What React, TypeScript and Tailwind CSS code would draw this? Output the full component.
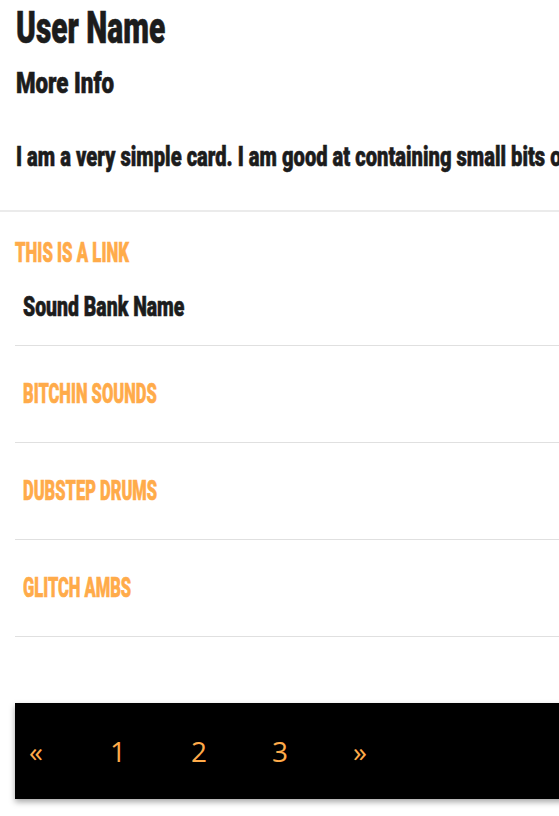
import React from 'react';

const banks = ['BITCHIN SOUNDS', 'DUBSTEP DRUMS', 'GLITCH AMBS'];
const pages = ['«', '1', '2', '3', '»'];

const display = { fontFamily: 'Roboto, Inter, "Liberation Sans", sans-serif' };

const App = () => {
  return (
    <div className="w-full overflow-hidden bg-white text-[#1c1c1c]" style={display}>
      <div className="w-[1200px] pb-4 [-webkit-text-stroke:0.6px_currentColor]">
        <div className="whitespace-nowrap px-4 pt-1">
          <h1 className="text-[44px] font-black leading-[48px]">
            <span className="inline-block origin-left scale-x-[0.68]">User Name</span>
          </h1>
          <h2 className="mt-[14px] text-[29px] font-black leading-[34px]">
            <span className="inline-block origin-left scale-x-[0.77]">More Info</span>
          </h2>
          <p className="mt-[40px] text-[28px] font-black leading-[34px]">
            <span className="inline-block origin-left scale-x-[0.72]">
              I am a very simple card. I am good at containing small bits of information.
            </span>
          </p>
        </div>
        <hr className="mt-[36px] border-t-2 border-[#ebebeb]" />
        <div className="px-[15px]">
          <a className="mt-[25px] block whitespace-nowrap text-[27px] font-black uppercase leading-[32px] text-[#ffab4a]">
            <span className="inline-block origin-left scale-x-[0.62]">This is a link</span>
          </a>
          <div className="flex h-[77px] items-center border-b border-[#e0e0e0] px-2">
            <span className="inline-block origin-left scale-x-[0.72] text-[27px] font-black leading-[32px]">
              Sound Bank Name
            </span>
          </div>
          {banks.map(b => (
            <div key={b} className="flex h-[97px] items-center border-b border-[#e0e0e0] px-2">
              <span className="inline-block origin-left scale-x-[0.61] text-[27px] font-black leading-[32px] text-[#ffab4a]">
                {b}
              </span>
            </div>
          ))}
          <nav className="mt-[66px] flex h-[96px] items-center bg-black shadow-[0_3px_6px_rgba(0,0,0,0.35)] [-webkit-text-stroke:0px]">
            {pages.map(p => (
              <span
                key={p}
                className="w-[81px] pl-[14px] text-[28px] leading-none text-[#ffab4a]"
                style={{ fontFamily: '"Open Sans", sans-serif' }}
              >
                {p}
              </span>
            ))}
          </nav>
        </div>
      </div>
    </div>
  );
};

export default App;
